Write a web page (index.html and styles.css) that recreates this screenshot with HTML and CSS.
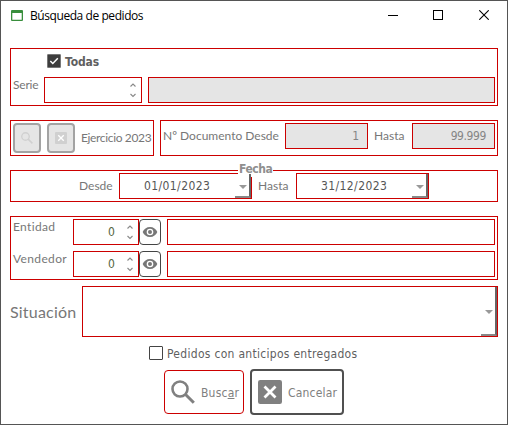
FILE: index.html
```html
<!DOCTYPE html>
<html lang="es">
<head>
<meta charset="utf-8">
<title>Búsqueda de pedidos</title>
<link rel="stylesheet" href="styles.css">
</head>
<body>
<svg class="defs" aria-hidden="true">
  <symbol id="search" viewBox="0 0 24 24"><circle cx="9" cy="9" r="7.5" fill="none" stroke="currentColor" stroke-width="2.6"/><path d="M14.3 14.3 22.8 22.8" stroke="currentColor" stroke-width="3"/></symbol>
  <symbol id="cancel" viewBox="0 0 24 24"><rect width="24" height="24" rx="2.2" fill="currentColor"/><path d="M6.5 6.5 17.5 17.5M17.5 6.5 6.5 17.5" class="cross"/></symbol>
  <symbol id="eye" viewBox="0 0 24 24"><path fill="currentColor" d="M12 4.5C7 4.5 2.7 7.6 1 12c1.7 4.400 6 7.500 11 7.500s9.300-3.100 11-7.500c-1.700-4.400-6-7.500-11-7.500zM12 17a5 5 0 1 1 0-10 5 5 0 0 1 0 10zm0-8a3 3 0 1 0 0 6 3 3 0 0 0 0-6z"/></symbol>
  <symbol id="spin" viewBox="0 0 8 18"><path d="M1.500 5.500 4 3 6.500 5.500M1.500 13 4 15.500 6.500 13" fill="none" stroke="#888" stroke-width="1.100"/></symbol>
</svg>
<div class="window">
  <header class="titlebar">
    <svg class="app-icon" width="12" height="11" viewBox="0 0 12 11"><path d="M1 0h10a1 1 0 0 1 1 1v9a1 1 0 0 1-1 1H1a1 1 0 0 1-1-1V1a1 1 0 0 1 1-1zM1.300 3v6.700h9.400V3z" fill="#388e3c" fill-rule="evenodd"/></svg>
    <h1 class="title">Búsqueda de pedidos</h1>
    <div class="controls">
      <svg width="10" height="11"><path d="M0 5.500h10" stroke="#000"/></svg>
      <svg width="10" height="10"><rect x=".5" y=".5" width="9" height="9" fill="none" stroke="#000"/></svg>
      <svg class="close" width="10" height="10"><path d="M.3.300 9.700 9.700M9.700.300.300 9.700" stroke="#000" stroke-width="1.100"/></svg>
    </div>
  </header>
  <main class="form">
    <section class="group series">
      <label class="check-row"><span class="check checked"><svg width="12" height="12" viewBox="0 0 12 12"><path d="M2.300 6 4.800 8.500 9.800 3.300" fill="none" stroke="#fff" stroke-width="1.500"/></svg></span><b class="t-todas">Todas</b></label>
      <div class="series-row">
        <span class="label t-serie">Serie</span>
        <div class="field spin-field"><svg class="spin"><use href="#spin"/></svg></div>
        <div class="field disabled grow"></div>
      </div>
    </section>

    <div class="columns">
      <section class="group exercise">
        <button class="tool"><svg width="12" height="12"><use href="#search"/></svg></button>
        <button class="tool"><svg width="12" height="12"><use href="#cancel"/></svg></button>
        <span class="label t-exercise">Ejercicio 2023</span>
      </section>
      <section class="group document">
        <span class="label t-document">Nº Documento Desde</span>
        <div class="field disabled number"><span class="t-one">1</span></div>
        <span class="label t-hasta">Hasta</span>
        <div class="field disabled number"><span class="t-max">99.999</span></div>
      </section>
    </div>

    <section class="group dates">
      <b class="legend">Fecha</b>
      <span class="label t-desde">Desde</span>
      <div class="field date"><span class="t-date">01/01/2023</span><i class="drop"></i></div>
      <span class="label t-hasta2">Hasta</span>
      <div class="field date"><span class="t-date">31/12/2023</span><i class="drop"></i></div>
    </section>

    <section class="group people">
      <div class="person">
        <span class="label t-entidad">Entidad</span>
        <div class="field spin-field"><span class="zero">0</span><svg class="spin"><use href="#spin"/></svg></div>
        <button class="view"><svg width="16" height="16"><use href="#eye"/></svg></button>
        <div class="field grow"></div>
      </div>
      <div class="person">
        <span class="label t-vendedor">Vendedor</span>
        <div class="field spin-field"><span class="zero">0</span><svg class="spin"><use href="#spin"/></svg></div>
        <button class="view"><svg width="16" height="16"><use href="#eye"/></svg></button>
        <div class="field grow"></div>
      </div>
    </section>

    <div class="status">
      <span class="label t-status">Situación</span>
      <div class="field combo"><i class="drop"></i></div>
    </div>

    <label class="advance"><span class="check"></span><span class="t-advance">Pedidos con anticipos entregados</span></label>

    <footer class="actions">
      <button class="action search"><svg width="24" height="24"><use href="#search"/></svg><span class="t-search">Busc<u>a</u>r</span></button>
      <button class="action cancel"><svg width="24" height="24"><use href="#cancel"/></svg><span class="t-cancel">Cancelar</span></button>
    </footer>
  </main>
</div>
</body>
</html>
```

FILE: styles.css
```css
* { box-sizing: border-box; }
body { margin: 0; background: #fff; color: #5f5f5f; font: 12px/16px "DejaVu Sans Condensed", "DejaVu Sans", sans-serif; }
.defs { position: absolute; width: 0; height: 0; }
svg { display: block; flex: none; }
button { margin: 0; padding: 0; font: inherit; color: inherit; background: #fff; }
.window { width: 508px; height: 425px; border: 1px solid #555; background: #fff; overflow: hidden; }
.cross { fill: none; stroke: #fff; stroke-width: 2.8; }
.tool .cross { stroke: #e5e5e5; }

.titlebar { height: 47px; display: flex; align-items: flex-start; padding: 9px 18px 0 10px; }
.title { margin: -2px 0 0 7px; color: #000; font: 12px/16px "Open Sans", sans-serif; letter-spacing: -.43px; white-space: nowrap; }
.controls { margin-left: auto; display: flex; gap: 35px; }
.close { margin-left: 1px; }

.form { padding: 0 9px; }
.group { border: 1px solid #c00; }
.field { border: 1px solid #c00; height: 26px; display: flex; align-items: center; background: #fff; }
.disabled { background: #e5e5e5; color: #858585; }
.grow { flex: 1; }
.label { font-family: Lato, sans-serif; font-size: 12px; color: #777; white-space: nowrap; flex: none; }
.spin { width: 8px; height: 18px; margin-left: auto; }
.check { width: 14px; height: 14px; border: 1px solid #444; border-radius: 1px; flex: none; }
.checked { background: #3d3d3d; border-color: #777; }

.series { height: 58px; padding: 5px 2px 0; }
.check-row { display: flex; align-items: center; gap: 4px; height: 14px; margin-left: 34px; }
.t-todas { position: relative; top: 1px; letter-spacing: -.1px; }
.series-row { display: flex; margin-top: 9px; }
.series .label { width: 31px; letter-spacing: -.2px; }
.series .spin-field { width: 98px; margin-right: 6px; padding-right: 4px; }

.columns { display: flex; gap: 6px; margin-top: 14px; }
.exercise { width: 144px; height: 36px; display: flex; gap: 6px; align-items: center; padding: 0 2px; }
.tool { width: 28px; height: 30px; flex: none; display: grid; place-items: center; border: 2px solid #a3a3a3; border-radius: 4px; background: #e5e5e5; color: #d0d0d0; }
.t-exercise { letter-spacing: -.35px; }
.document { width: 338px; height: 36px; display: flex; padding: 2px; line-height: 26px; }
.document .label { line-height: 26px; }
.document .t-document { width: 122px; }
.document .t-hasta { width: 38px; margin-left: 6px; }
.number { width: 83px; justify-content: flex-end; padding-right: 8px; }
.t-max { letter-spacing: -.4px; }

.dates { position: relative; height: 32px; margin-top: 14px; display: flex; align-items: center; padding-left: 68px; }
.legend { position: absolute; left: 227px; top: -10px; padding: 0 1px; background: #fff; color: #8f8f8f; letter-spacing: -.45px; }
.dates .t-desde { width: 40px; }
.dates .t-hasta2 { width: 38px; margin-left: 6px; }
.date { width: 133px; padding-left: 24px; color: #555; justify-content: space-between; }
.t-date { letter-spacing: .4px; }
.drop { position: relative; width: 16px; height: 24px; border-right: 2px solid #666; border-bottom: 2px solid #888; }
.drop::after { content: ""; position: absolute; left: 4px; top: 11px; border: 4px solid transparent; border-top-color: #999; border-bottom: 0; }

.people { height: 64px; margin-top: 14px; padding: 2px; display: grid; gap: 6px; }
.person { display: flex; }
.person .label { width: 60px; letter-spacing: .35px; }
.person .spin-field { width: 66px; padding-right: 4px; }
.zero { margin-left: 34px; color: #55663f; }
.view { width: 22px; height: 26px; margin-right: 6px; border: 1px solid #444; border-radius: 4px; display: grid; place-items: center; color: #777; }

.status { display: flex; align-items: center; margin-top: 6px; height: 51px; }
.status .label { width: 72px; font-size: 16px; line-height: 20px; letter-spacing: .2px; }
.combo { height: 51px; flex: 1; justify-content: flex-end; }
.combo .drop { height: 49px; }
.combo .drop::after { top: 23px; }

.advance { display: flex; align-items: center; gap: 4px; height: 14px; margin: 9px 0 0 139px; white-space: nowrap; }
.t-advance { position: relative; top: 1px; letter-spacing: .29px; }
.actions { display: flex; align-items: center; gap: 6px; margin: 9px 0 0 154px; }
.action { display: flex; align-items: center; color: #808080; white-space: nowrap; }
.search { width: 80px; height: 44px; border: 1px solid #c00; border-radius: 4px; padding-left: 6px; gap: 6px; }
.cancel { width: 94px; height: 46px; border: 2px solid #505050; border-radius: 4px; padding-left: 6px; gap: 6px; }
.t-search, .t-cancel { position: relative; top: 1px; letter-spacing: .2px; }
```
